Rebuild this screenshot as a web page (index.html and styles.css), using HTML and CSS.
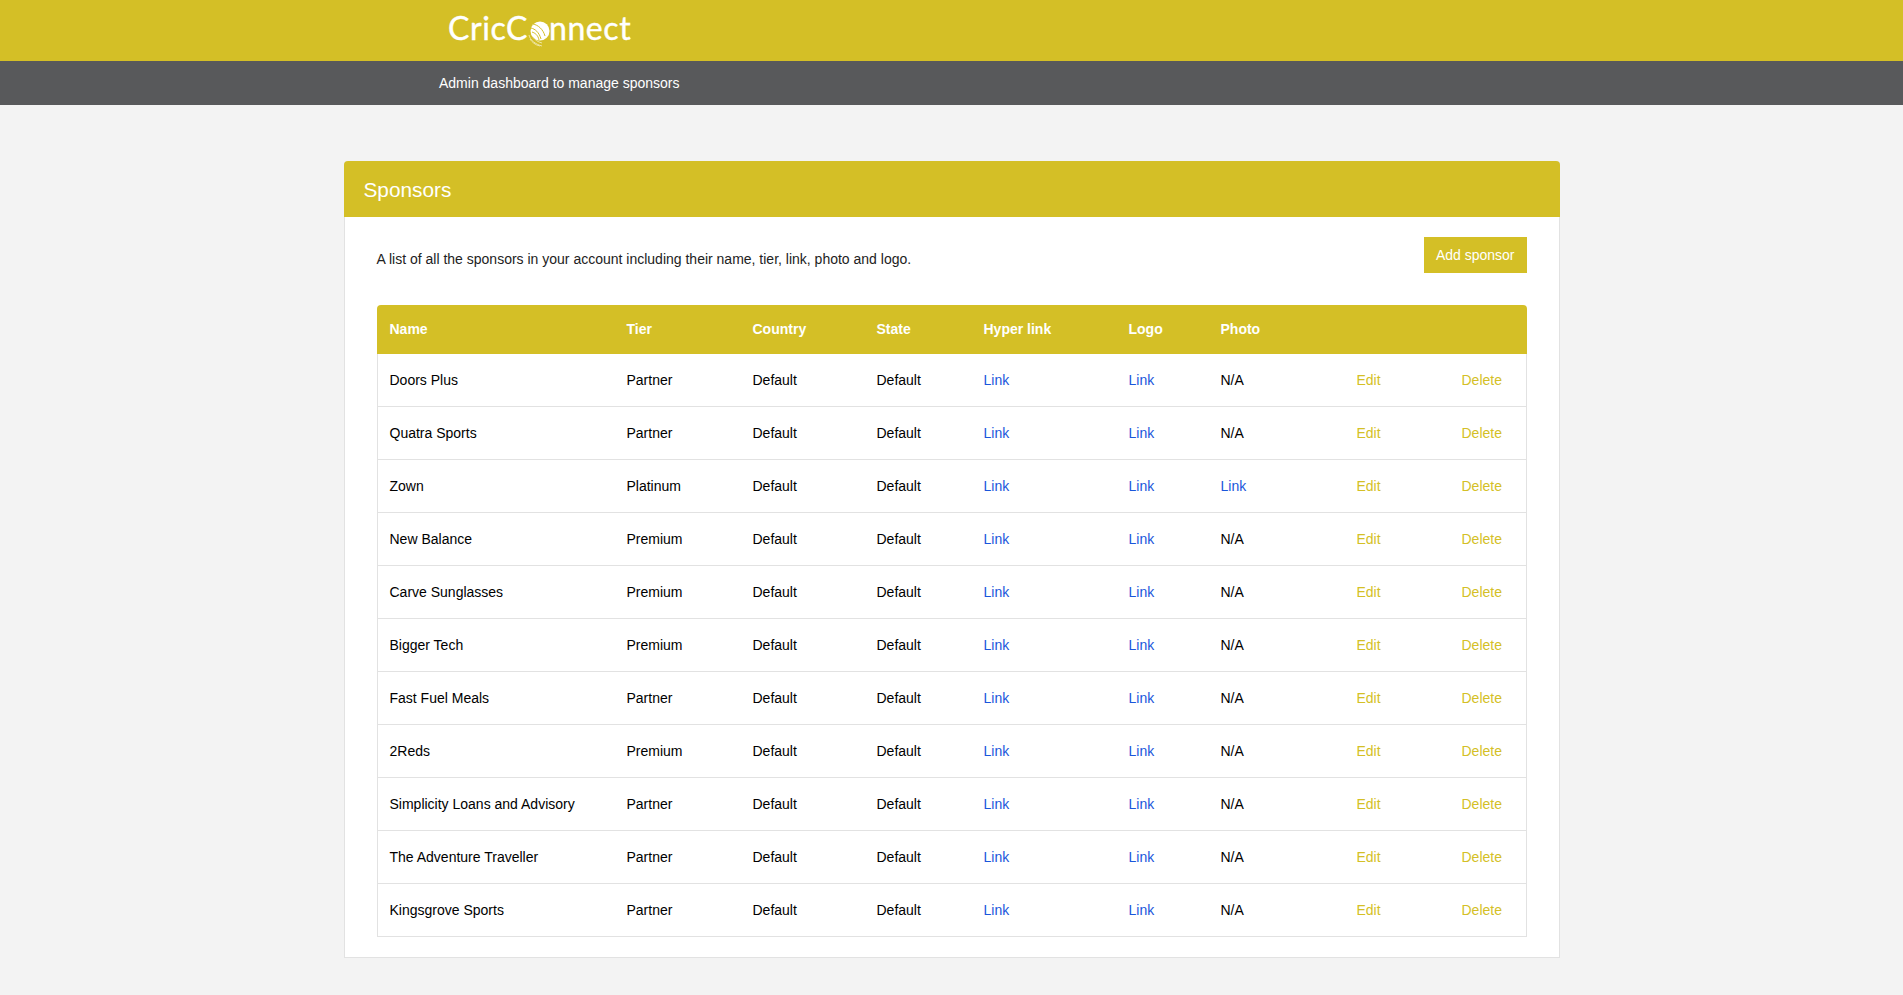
FILE: index.html
```html
<!DOCTYPE html>
<html lang="en-US">
  <head>
    <meta charset="utf-8" />
    <meta name="viewport" content="width=device-width" />
    <title>Sponsors</title>
    <link rel="stylesheet" href="styles.css">
  </head>
  <body>
    <header class="brand-bar">
      <div class="logo">
        <span>CricC</span>
        <svg class="logo-ball" width="24" height="30" viewBox="0 0 24 30" aria-hidden="true">
          <circle cx="14" cy="11" r="9.5" fill="#fff"/>
          <path d="M5 8c4 1 8 4 10 11M6 12c3 1 6 3 7 8M7 4c5 1 10 5 12 12" fill="none" stroke="#d4bf26" stroke-width="1"/>
          <path d="M3 15c1 5 6 9 13 11M4 19c2 3 5 6 10 7M7 17c2 3 5 5 9 6" fill="none" stroke="#efe6a4" stroke-width="1"/>
        </svg>
        <span>nnect</span>
      </div>
    </header>
    <div class="sub-bar">Admin dashboard to manage sponsors</div>

    <main class="card">
      <h1 class="card-title">Sponsors</h1>
      <div class="card-body">
        <div class="intro">
          <p>A list of all the sponsors in your account including their name, tier, link, photo and logo.</p>
          <a class="add-btn" href="#">Add sponsor</a>
        </div>
        <table class="sponsors">
          <colgroup>
            <col class="c-name"><col class="c-tier"><col class="c-country"><col class="c-state">
            <col class="c-hyper"><col class="c-logo"><col class="c-photo"><col class="c-edit"><col>
          </colgroup>
          <thead>
            <tr><th>Name</th><th>Tier</th><th>Country</th><th>State</th><th>Hyper link</th><th>Logo</th><th>Photo</th><th></th><th></th></tr>
          </thead>
          <tbody id="rows"></tbody>
        </table>
      </div>
    </main>

    <script>
      const sponsors = [
        ["Doors Plus", "Partner"],
        ["Quatra Sports", "Partner"],
        ["Zown", "Platinum", true],
        ["New Balance", "Premium"],
        ["Carve Sunglasses", "Premium"],
        ["Bigger Tech", "Premium"],
        ["Fast Fuel Meals", "Partner"],
        ["2Reds", "Premium"],
        ["Simplicity Loans and Advisory", "Partner"],
        ["The Adventure Traveller", "Partner"],
        ["Kingsgrove Sports", "Partner"]
      ];

      const rows = document.getElementById("rows");
      for (const [name, tier, photo] of sponsors) {
        const tr = document.createElement("tr");
        tr.innerHTML = `
          <td>${name}</td>
          <td>${tier}</td>
          <td>Default</td>
          <td>Default</td>
          <td><a class="link" href="#">Link</a></td>
          <td><a class="link" href="#">Link</a></td>
          <td>${photo ? '<a class="link" href="#">Link</a>' : "N/A"}</td>
          <td><a class="action" href="#">Edit</a></td>
          <td><a class="action" href="#">Delete</a></td>`;
        rows.appendChild(tr);
      }
    </script>
  </body>
</html>
```

FILE: styles.css
```css
html {
  font-family: "Liberation Sans", Arial, sans-serif;
  font-size: 14px;
}

body {
  margin: 0;
  background: #f3f3f3;
  color: #000;
}

a {
  text-decoration: none;
}

.brand-bar {
  height: 61px;
  background: #d4bf26;
  padding-left: 448px;
  box-sizing: border-box;
}

.logo {
  display: flex;
  align-items: flex-start;
  padding-top: 8px;
  color: #fff;
  font-family: Lato, sans-serif;
  font-size: 32px;
  line-height: 40px;
  letter-spacing: 0.6px;
  -webkit-text-stroke: 0.4px #fff;
}

.logo-ball {
  margin: 12px -1px 0 -2px;
}

.sub-bar {
  height: 44px;
  line-height: 44px;
  padding-left: 439px;
  background: #58595b;
  color: #fff;
}

.card {
  width: 1216px;
  margin: 56px auto 0;
  background: #fff;
  border: 1px solid #e2e2e2;
  border-top: none;
  border-radius: 4px 4px 0 0;
  box-sizing: border-box;
}

.card-title {
  margin: 0 -1px;
  height: 56px;
  line-height: 57px;
  padding-left: 20px;
  background: #d4bf26;
  color: #fff;
  font-size: 20.8px;
  font-weight: normal;
  border-radius: 4px 4px 0 0;
}

.card-body {
  padding: 20px 32px 20px 32px;
}

.intro {
  display: flex;
  justify-content: space-between;
  align-items: flex-start;
  height: 68px;
}

.intro p {
  margin: 14px 0 0;
  color: #222;
}

.add-btn {
  padding: 0 12px;
  height: 36px;
  line-height: 36px;
  background: #d4bf26;
  color: #fff;
}

.sponsors {
  width: 100%;
  table-layout: fixed;
  border-collapse: separate;
  border-spacing: 0;
}

.c-name { width: 238px; }
.c-tier { width: 126px; }
.c-country { width: 124px; }
.c-state { width: 107px; }
.c-hyper { width: 145px; }
.c-logo { width: 92px; }
.c-photo { width: 136px; }
.c-edit { width: 105px; }

.sponsors th {
  height: 49px;
  padding: 0 12px 2px;
  box-sizing: border-box;
  background: #d4bf26;
  color: #fff;
  font-weight: bold;
  text-align: left;
}

.sponsors th:first-child {
  padding-left: 13px;
  border-top-left-radius: 4px;
}

.sponsors th:last-child { border-top-right-radius: 4px; }

.sponsors td {
  height: 52px;
  padding: 0 12px;
  border-bottom: 1px solid #e2e2e2;
}

.sponsors td:first-child { border-left: 1px solid #e2e2e2; }
.sponsors td:last-child { border-right: 1px solid #e2e2e2; }

.link { color: #1a56db; }
.action { color: #d4bf26; }
```
